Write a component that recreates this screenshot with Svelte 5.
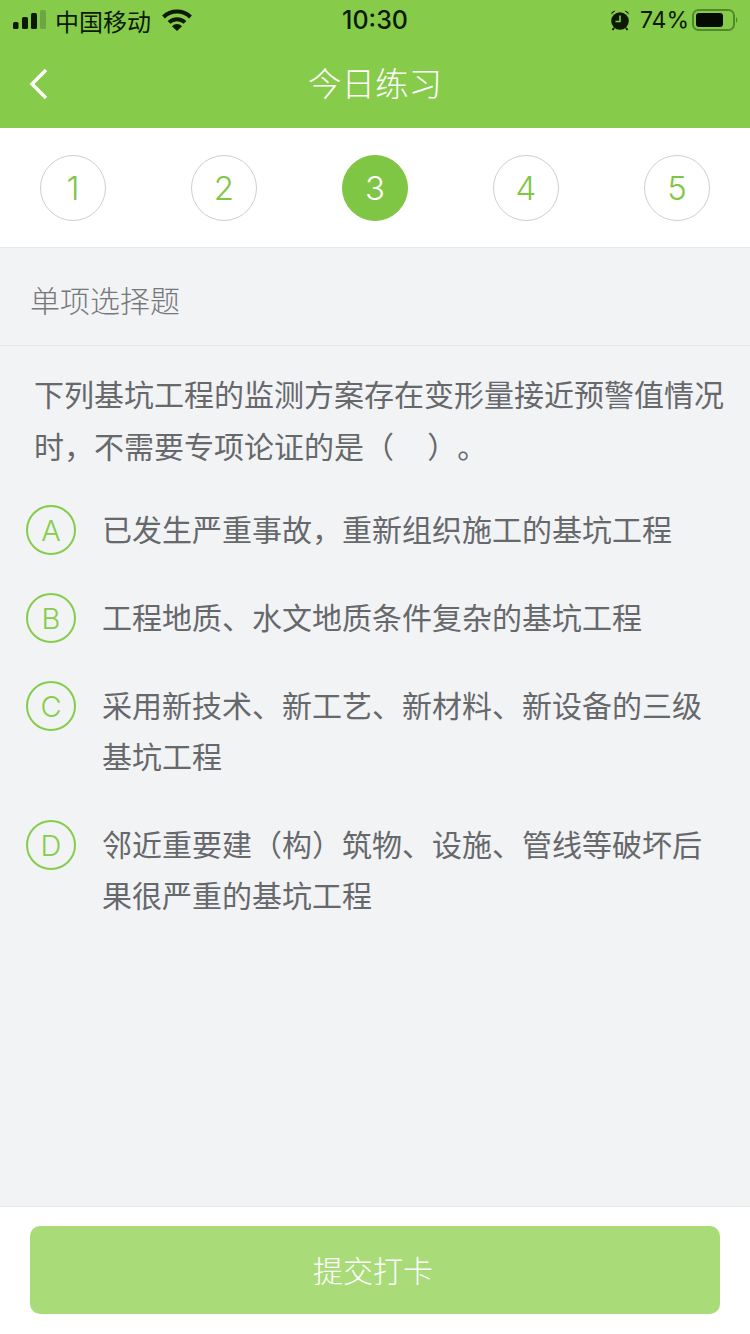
<script>
  const steps = [1, 2, 3, 4, 5];
  const current = 3;
  const options = [
    { key: 'A', text: '已发生严重事故，重新组织施工的基坑工程' },
    { key: 'B', text: '工程地质、水文地质条件复杂的基坑工程' },
    { key: 'C', text: '采用新技术、新工艺、新材料、新设备的三级基坑工程' },
    { key: 'D', text: '邻近重要建（构）筑物、设施、管线等破坏后果很严重的基坑工程' }
  ];
</script>

<div class="page">
  <header class="top">
    <div class="status">
      <div class="status-left">
        <svg class="signal" width="33" height="22" viewBox="0 0 33 22">
          <rect x="0" y="13" width="5.5" height="7" rx="1.5" fill="#0c1a05" />
          <rect x="9" y="8" width="6" height="12" rx="1.5" fill="#0c1a05" />
          <rect x="18" y="4" width="6" height="16" rx="1.5" fill="#0c1a05" />
          <rect x="27" y="1" width="6" height="19" rx="1.5" fill="#6ba544" />
        </svg>
        <span class="carrier">中国移动</span>
        <svg class="wifi" width="30" height="22" viewBox="0 0 30 22">
          <path d="M1.5 8 A19.5 19.5 0 0 1 28.5 8" fill="none" stroke="#0c1a05" stroke-width="4" />
          <path d="M7 13.4 A11.5 11.5 0 0 1 23 13.4" fill="none" stroke="#0c1a05" stroke-width="4" />
          <path d="M10 17.2 A7 7 0 0 1 20 17.2 L15 22 Z" fill="#0c1a05" />
        </svg>
      </div>
      <span class="time">10:30</span>
      <div class="status-right">
        <svg class="alarm" width="20" height="22" viewBox="0 0 20 22">
          <circle cx="10" cy="12" r="8.8" fill="#0c1a05" />
          <path d="M10 6.5 V12.5 H5.5" fill="none" stroke="#87cb4b" stroke-width="1.6" />
          <path d="M1 5.5 A4 4 0 0 1 5.5 1.8 Z M19 5.5 A4 4 0 0 0 14.5 1.8 Z" fill="#0c1a05" />
          <path d="M4 19 L2.5 21 M16 19 L17.5 21" stroke="#0c1a05" stroke-width="2" />
        </svg>
        <span class="percent">74%</span>
        <svg class="battery" width="46" height="22" viewBox="0 0 46 22">
          <rect x="1" y="1" width="41" height="20" rx="5.5" fill="none" stroke="#4f8a2c" stroke-width="2" />
          <rect x="4" y="4" width="27" height="14" rx="3" fill="#050a02" />
          <path d="M44 8 A4 4 0 0 1 44 14 Z" fill="#4f8a2c" />
        </svg>
      </div>
    </div>
    <div class="nav">
      <svg class="back" width="20" height="32" viewBox="0 0 20 32">
        <path d="M17 2 L3 16 L17 30" fill="none" stroke="#fff" stroke-width="3.4" />
      </svg>
      <h1>今日练习</h1>
    </div>
  </header>

  <div class="steps">
    {#each steps as step}
      <div class="step" class:active={step === current}>{step}</div>
    {/each}
  </div>

  <main>
    <div class="type">单项选择题</div>
    <p class="question">下列基坑工程的监测方案存在变形量接近预警值情况时，不需要专项论证的是（&nbsp;&nbsp;&nbsp;&nbsp;）。</p>
    <ul>
      {#each options as opt}
        <li>
          <span class="key">{opt.key}</span>
          <span class="text">{opt.text}</span>
        </li>
      {/each}
    </ul>
  </main>

  <footer>
    <button>提交打卡</button>
  </footer>
</div>

<style>
  :global(body) {
    margin: 0;
    background: #f2f3f5;
  }

  .page {
    display: flex;
    flex-direction: column;
    height: 1334px;
    overflow: hidden;
    font-family: "Liberation Sans", "Noto Sans CJK SC", sans-serif;
    text-spacing-trim: space-all;
  }

  .top {
    height: 128px;
    background: #87cb4b;
    flex-shrink: 0;
  }

  .status {
    display: grid;
    grid-template-columns: 1fr auto 1fr;
    align-items: center;
    height: 40px;
    padding: 0 12px 0 13px;
    color: #0c1a05;
  }

  .status-left,
  .status-right {
    display: flex;
    align-items: center;
  }

  .status-right {
    justify-content: flex-end;
  }

  .signal {
    margin-right: 9px;
  }

  .carrier {
    font-size: 24px;
    margin-right: 11px;
  }

  .time {
    font-family: Inter, "Liberation Sans", sans-serif;
    font-size: 25px;
    font-weight: 500;
    margin-left: -1px;
  }

  .alarm {
    margin-right: 10px;
  }

  .percent {
    font-family: Inter, "Liberation Sans", sans-serif;
    font-size: 23px;
    margin-right: 3px;
  }

  .nav {
    position: relative;
    height: 88px;
    display: flex;
    align-items: center;
    justify-content: center;
  }

  .back {
    position: absolute;
    left: 29px;
    top: 28px;
  }

  h1 {
    margin: 0 0 6px;
    color: #fff;
    font-size: 33.5px;
    font-weight: 300;
  }

  .steps {
    display: flex;
    justify-content: space-between;
    align-items: center;
    height: 120px;
    padding: 1px 40px 0;
    box-sizing: border-box;
    background: #fff;
    border-bottom: 1px solid #e6e7e9;
    flex-shrink: 0;
  }

  .step {
    width: 66px;
    height: 66px;
    box-sizing: border-box;
    display: flex;
    align-items: center;
    justify-content: center;
    border: 1px solid #cfcfcf;
    border-radius: 50%;
    color: #7fc644;
    font-family: Inter, "Liberation Sans", sans-serif;
    font-size: 33px;
    font-weight: 350;
  }

  .step.active {
    background: #7fc644;
    border-color: #7fc644;
    color: #fff;
  }

  main {
    flex: 1;
    min-height: 0;
    background: #f2f3f5;
  }

  .type {
    display: flex;
    align-items: center;
    height: 93px;
    padding: 4px 0 0 30px;
    border-bottom: 1px solid #e6e7e9;
    color: #77787b;
    font-size: 30px;
    font-weight: 300;
  }

  .question {
    margin: 24px 0 0;
    padding: 0 25px 0 34px;
    color: #66686b;
    font-size: 30px;
    line-height: 52px;
    font-weight: 400;
  }

  ul {
    list-style: none;
    margin: 31px 0 0;
    padding: 0 0 0 26px;
  }

  li {
    display: flex;
    align-items: flex-start;
    margin-bottom: 37px;
  }

  .key {
    width: 50px;
    height: 50px;
    flex-shrink: 0;
    box-sizing: border-box;
    display: flex;
    align-items: center;
    justify-content: center;
    border: 2px solid #86cd4b;
    border-radius: 50%;
    color: #86cd4b;
    font-family: Inter, "Liberation Sans", sans-serif;
    font-size: 29px;
    font-weight: 350;
  }

  .text {
    width: 610px;
    margin-left: 26px;
    color: #66686b;
    font-size: 30px;
    line-height: 51px;
    font-weight: 400;
  }

  footer {
    flex-shrink: 0;
    height: 128px;
    padding: 19px 30px 0;
    box-sizing: border-box;
    background: #fff;
    border-top: 1px solid #e6e7e9;
  }

  button {
    display: block;
    width: 100%;
    height: 88px;
    padding: 0 4px 3px 0;
    border: 0;
    border-radius: 10px;
    background: #a9dc78;
    color: #fff;
    font-family: inherit;
    font-size: 30px;
    font-weight: 300;
  }
</style>
